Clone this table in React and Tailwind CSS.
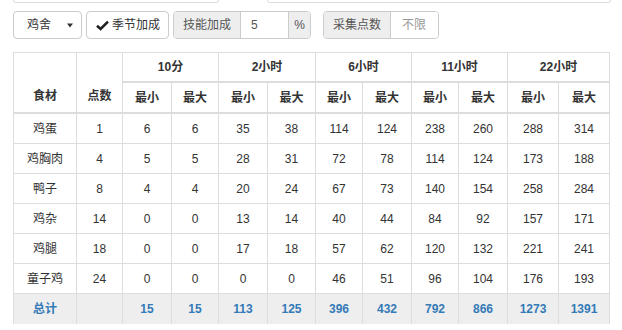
import React from "react";

const rows = [
  ["鸡蛋", "1", "6", "6", "35", "38", "114", "124", "238", "260", "288", "314"],
  ["鸡胸肉", "4", "5", "5", "28", "31", "72", "78", "114", "124", "173", "188"],
  ["鸭子", "8", "4", "4", "20", "24", "67", "73", "140", "154", "258", "284"],
  ["鸡杂", "14", "0", "0", "13", "14", "40", "44", "84", "92", "157", "171"],
  ["鸡腿", "18", "0", "0", "17", "18", "57", "62", "120", "132", "221", "241"],
  ["童子鸡", "24", "0", "0", "0", "0", "46", "51", "96", "104", "176", "193"],
];
const total = ["总计", "", "15", "15", "113", "125", "396", "432", "792", "866", "1273", "1391"];
const groups = ["10分", "2小时", "6小时", "11小时", "22小时"];

export default function App() {
  return (
    <div
      className="w-[622px] h-[330px] bg-white text-[12px] text-[#333] overflow-hidden"
      style={{ fontFamily: '"Liberation Sans", Arial, "Noto Sans CJK SC", sans-serif' }}
    >
      {/* remnants of elements above */}
      <div className="flex h-[3px]">
        <div className="ml-[13px] w-[206px] border-b border-x border-[#ddd] rounded-b-[3px]" />
        <div className="ml-[48px] w-[344px] border-b border-x border-[#ddd] rounded-b-[3px]" />
      </div>

      {/* controls */}
      <div className="flex items-center mt-[8px] ml-[13px] h-[28px]">
        <div className="flex items-center justify-between w-[69px] h-[28px] border border-[#ccc] rounded-[4px] bg-white pl-[13px] pr-[8px]">
          <span>鸡舍</span>
          <svg width="6" height="5" viewBox="0 0 6 5">
            <path d="M0 0.5 L6 0.5 L3 4.5 Z" fill="#333" />
          </svg>
        </div>
        <div className="ml-[4px] flex items-center w-[83px] h-[28px] border border-[#ccc] rounded-[4px] bg-white pl-[9px]">
          <svg width="13" height="11" viewBox="0 0 13 11" className="mr-[3px]">
            <path d="M1 5.8 L4.6 9 L12 1.6" fill="none" stroke="#222" strokeWidth="2.6" />
          </svg>
          <span>季节加成</span>
        </div>
        <div className="ml-[4px] flex h-[28px] border border-[#ccc] rounded-[4px] overflow-hidden">
          <div className="w-[67px] bg-[#eee] text-[#555] flex items-center justify-center border-r border-[#ccc]">技能加成</div>
          <div className="w-[47px] flex items-center pl-[10px] text-[#555] bg-white">5</div>
          <div className="w-[22px] bg-[#eee] text-[#555] flex items-center justify-center border-l border-[#ccc]">%</div>
        </div>
        <div className="ml-[12px] flex h-[28px] border border-[#ccc] rounded-[4px] overflow-hidden">
          <div className="w-[67px] bg-[#eee] text-[#555] flex items-center justify-center border-r border-[#ccc]">采集点数</div>
          <div className="w-[47px] flex items-center pl-[11px] text-[#999] bg-white">不限</div>
        </div>
      </div>

      {/* table */}
      <div className="mt-[13px] ml-[13px] w-fit grid grid-cols-[63px_46px_49px_47px_49px_48px_47px_49px_47px_49px_51px_51px] border-t border-l border-[#ddd]">
        <div className="row-span-2 h-[61px] border-r border-b-2 border-[#ddd] flex items-end justify-center pb-[7px] font-bold">食材</div>
        <div className="row-span-2 h-[61px] border-r border-b-2 border-[#ddd] flex items-end justify-center pb-[7px] font-bold">点数</div>
        {groups.map((g) => (
          <div key={g} className="col-span-2 h-[30px] border-r border-b-2 border-[#ddd] flex items-center justify-center font-bold">
            {g}
          </div>
        ))}
        {groups.map((g) => (
          <React.Fragment key={"s" + g}>
            <div className="h-[31px] border-r border-b-2 border-[#ddd] flex items-center justify-center font-bold">最小</div>
            <div className="h-[31px] border-r border-b-2 border-[#ddd] flex items-center justify-center font-bold">最大</div>
          </React.Fragment>
        ))}
        {rows.map((r, i) =>
          r.map((c, j) => (
            <div key={i + "-" + j} className="h-[30px] border-r border-b border-[#ddd] flex items-center justify-center">
              {c}
            </div>
          ))
        )}
        {total.map((c, j) => (
          <div key={"t" + j} className="h-[30px] border-r border-[#ddd] bg-[#eee] flex items-center justify-center font-bold text-[#337ab7]">
            {c}
          </div>
        ))}
      </div>
    </div>
  );
}
